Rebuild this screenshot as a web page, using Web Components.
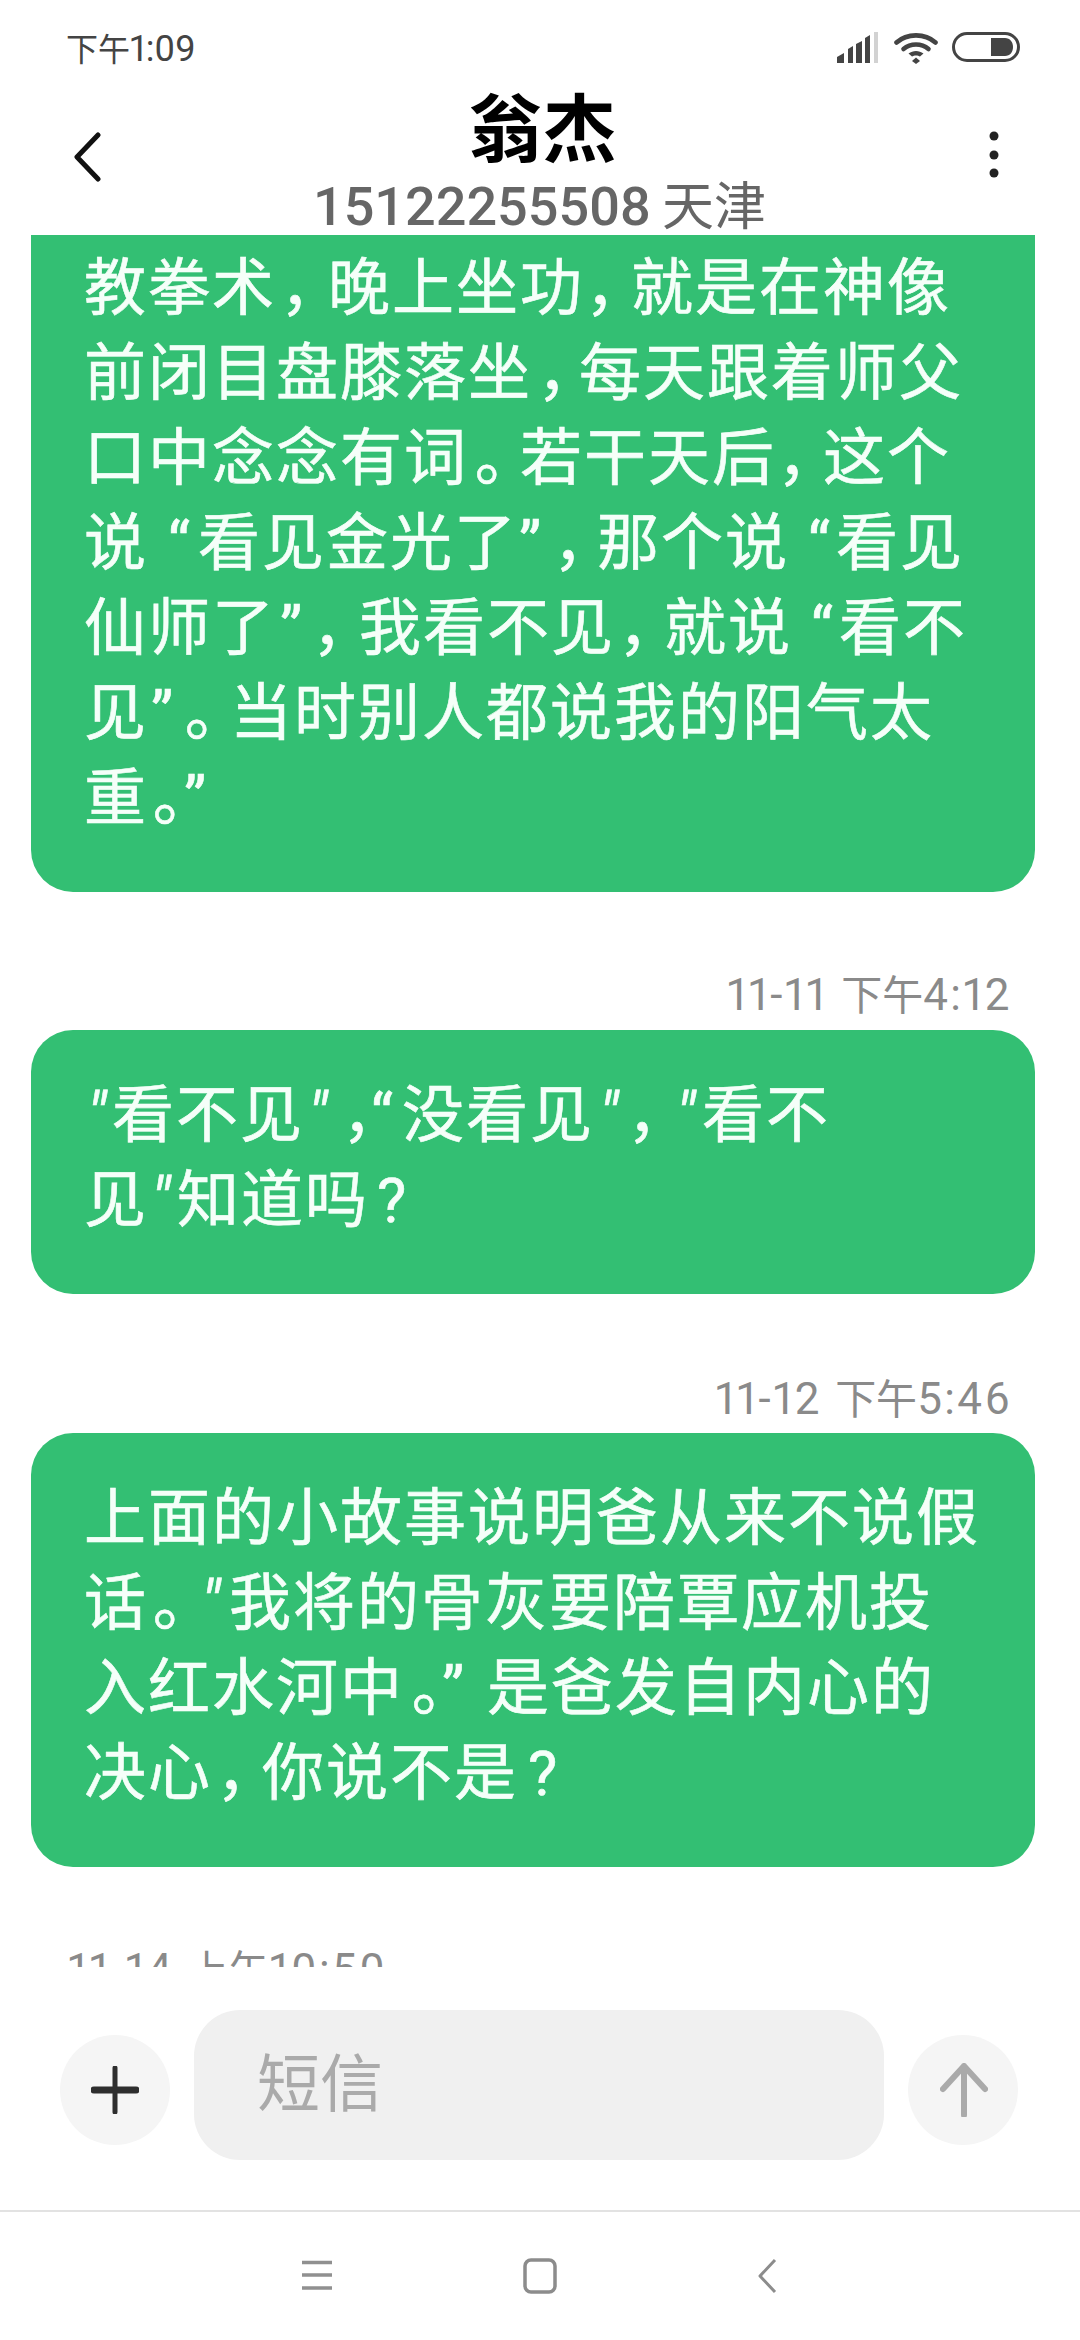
<!DOCTYPE html>
<html lang="zh-CN">
<head>
<meta charset="utf-8">
<title>短信</title>
<style>
html,body{margin:0;padding:0;background:#fff}
body{font-family:Roboto,"Noto Sans CJK SC",sans-serif}
</style>
</head>
<body>
<sms-app>
  <sms-header slot="header" name="翁杰" sub="15122255508" city="天津" time="1:09" ampm="下午"></sms-header>
  <sms-bubble cut>教拳术<p-m w="52" x="8">，</p-m>晚上坐功<p-m w="47" x="5">，</p-m>就是在神像<br>前闭目盘膝落坐<p-m w="47" x="9">，</p-m>每天跟着师父<br>口中念念有词<p-m w="52" x="6">。</p-m>若干天后<p-m w="47" x="5">，</p-m>这个<br>说<p-m w="50" x="20">“</p-m>看见金光了<p-m w="35" x="1">”</p-m><p-m w="44" x="4">，</p-m>那个说<p-m w="47" x="19">“</p-m>看见<br>仙师了<p-m w="38" x="4">”</p-m><p-m w="45" x="2">，</p-m>我看不见<p-m w="49" x="7">，</p-m>就说<p-m w="47" x="19">“</p-m>看不<br>见<p-m w="31" x="3">”</p-m><p-m w="51" x="5">。</p-m>当时别人都说我的阳气太<br>重<p-m w="36" x="4">。</p-m><p-m w="40" x="0">”</p-m></sms-bubble>
  <sms-stamp align="right">11-11 <c-j>下午</c-j>4:12</sms-stamp>
  <sms-bubble><p-m w="28" x="3" i>"</p-m>看不见<p-m w="38" x="4" i>"</p-m><p-m w="28" x="4">，</p-m><p-m w="32" x="1">“</p-m>没看见<p-m w="36" x="5" i>"</p-m><p-m w="44" x="1">，</p-m><p-m w="28" x="2" i>"</p-m>看不<br>见<p-m w="29" x="3" i>"</p-m>知道吗<p-m w="40" x="8">?</p-m></sms-bubble>
  <sms-stamp align="right" style="margin-top:80px;margin-bottom:9px">11-12 <c-j>下午</c-j>5:46</sms-stamp>
  <sms-bubble>上面的小故事说明爸从来不说假<br>话<p-m w="50" x="4">。</p-m><p-m w="31" x="3" i>"</p-m>我将的骨灰要陪覃应机投<br>入红水河中<p-m w="36" x="7">。</p-m><p-m w="47" x="2">”</p-m>是爸发自内心的<br>决心<p-m w="50" x="8">，</p-m>你说不是<p-m w="40" x="10">?</p-m></sms-bubble>
  <sms-stamp>11-14 <c-j>上午</c-j>10:50</sms-stamp>
  <sms-composer slot="composer" placeholder="短信"></sms-composer>
  <sms-nav slot="nav"></sms-nav>
</sms-app>

<script>
function def(name, html, init){
  customElements.define(name, class extends HTMLElement{
    constructor(){super();this.attachShadow({mode:'open'})}
    connectedCallback(){
      this.shadowRoot.innerHTML = typeof html==='function'?html(this):html;
      if(init)init(this);
    }
  });
}

def('sms-app',`<style>
:host{display:flex;flex-direction:column;width:1080px;height:2340px;overflow:hidden;background:#fff;color:#000}
.list{flex:none;height:1732px;overflow:hidden;display:flex;flex-direction:column}
</style>
<slot name="header"></slot>
<div class="list"><slot></slot></div>
<slot name="composer"></slot>
<slot name="nav"></slot>`);

def('sms-header',h=>`<style>
:host{display:block;height:235px;flex:none;background:#fff}
.status{height:86px;box-sizing:border-box;display:flex;align-items:flex-start;justify-content:space-between;padding:29px 60px 0 66px;color:#444}
.time{font-size:36px;line-height:40px;font-variant-numeric:proportional-nums}
.time span{font-size:32px}
.icons{display:flex;align-items:flex-start;margin-top:3px}
.icons svg{display:block}
.bar{height:149px;box-sizing:border-box;display:grid;grid-template-columns:1fr auto 1fr;align-items:start}
.back{padding:46px 0 0 71px}
.more{padding:44px 0 0 0;justify-self:end;margin-right:80px}
.mid{text-align:center;margin-left:2px;padding-top:3px}
.name{font-size:74px;line-height:84px;font-weight:700;color:#000;white-space:nowrap;padding-left:3px}
.sub{font-size:54px;line-height:56px;margin-top:6px;font-weight:500;color:#666;white-space:nowrap;padding-right:3px;word-spacing:-2px}
.sub span{font-size:52px;font-weight:400}
</style>
<div class="status">
  <div class="time"><span>${h.getAttribute('ampm')}</span>${h.getAttribute('time')}</div>
  <div class="icons">
    <svg width="42" height="31" viewBox="0 0 42 31">
      <path d="M0 31V25L7 21V31Z" fill="#444"/><path d="M11 31V17L16 14V31Z" fill="#444"/><path d="M19 31V12L25 9V31Z" fill="#444"/><path d="M28 31V6L33 3V31Z" fill="#444"/><path d="M37 31V0H41V31Z" fill="#d2d2d2"/>
    </svg>
    <svg width="44" height="32" viewBox="0 0 44 32" style="margin-left:15px">
      <g fill="none" stroke="#444" stroke-width="4.6" stroke-linecap="round"><path d="M2.500 10.500C13 1 31 1 41.500 10.500"/><path d="M9.500 17C16.500 11 27.500 11 34.500 17"/></g>
      <path d="M14.500 21.500C19 18 25 18 29.500 21.500L26 24.500C24 23 20 23 18 24.500Z" fill="#444"/>
      <path d="M22 25.500L26 29L22 32L18 29Z" fill="#444"/>
    </svg>
    <svg width="68" height="30" viewBox="0 0 68 30" style="margin-left:14px">
      <rect x="1.500" y="1.500" width="65" height="27" rx="13.500" fill="none" stroke="#444" stroke-width="3"/>
      <path d="M39 6H53C58 6 61 10 61 15C61 20 58 24 53 24H39Z" fill="#444"/>
    </svg>
  </div>
</div>
<div class="bar">
  <div class="back"><svg width="32" height="50" viewBox="0 0 32 50" style="display:block"><path d="M27 3L6 25L27 47" fill="none" stroke="#111" stroke-width="5" stroke-linecap="round" stroke-linejoin="round"/></svg></div>
  <div class="mid"><div class="name">${h.getAttribute('name')}</div><div class="sub">${h.getAttribute('sub')} <span>${h.getAttribute('city')}</span></div></div>
  <div class="more"><svg width="12" height="50" viewBox="0 0 12 50" style="display:block"><circle cx="6" cy="6" r="4.500" fill="#222"/><circle cx="6" cy="25" r="4.500" fill="#222"/><circle cx="6" cy="43" r="4.500" fill="#222"/></svg></div>
</div>`);

def('sms-bubble',`<style>
:host{display:block;flex:none;width:1004px;margin-left:31px;box-sizing:border-box;background:#33bf73;color:#f5fff9;border-radius:42px;padding:43px 20px 51px 53px;font-size:62px;line-height:85px;letter-spacing:2px;white-space:nowrap;font-weight:400;-webkit-text-stroke:.6px #f5fff9}
:host([cut]){border-radius:0 0 42px 42px;padding-top:11px}
</style><slot></slot>`);

def('sms-stamp',`<style>
:host{display:block;flex:none;height:50px;line-height:50px;font-size:44px;letter-spacing:2.4px;font-variant-numeric:proportional-nums;color:#8a8a8a;margin:78px 0 10px;padding:0 68px 0 68px;white-space:nowrap}
:host([align=right]){text-align:right}
</style><slot></slot>`);

def('c-j',`<style>
:host{display:inline;font-size:41px;letter-spacing:0}
</style><slot></slot>`);

def('p-m',`<style>
:host{display:inline-block;box-sizing:border-box;letter-spacing:0;white-space:nowrap;font-feature-settings:"palt"}
:host([i]){font-style:italic}
</style><slot></slot>`, h=>{
  h.style.width=(h.getAttribute('w')||60)+'px';
  h.style.paddingLeft=(h.getAttribute('x')||0)+'px';
});

def('sms-composer',h=>`<style>
:host{display:flex;flex:none;box-sizing:border-box;height:243px;padding:43px 62px 0 60px;gap:24px;align-items:flex-start;background:#fff}
.c{flex:none;width:110px;height:110px;border-radius:50%;background:#f5f5f5;margin-top:25px;display:flex;align-items:center;justify-content:center}
.f{flex:none;width:690px;height:150px;border-radius:46px;background:#f0f0f0;box-sizing:border-box;padding:0 0 0 63px;font-size:63px;line-height:150px;color:#aaa}
</style>
<div class="c"><svg width="48" height="48" viewBox="0 0 48 48"><path d="M24 2V46" stroke="#2e2e2e" stroke-width="5" stroke-linecap="round"/><path d="M3 24H45" stroke="#2e2e2e" stroke-width="7" stroke-linecap="round"/></svg></div>
<div class="f">${h.getAttribute('placeholder')}</div>
<div class="c"><svg width="48" height="54" viewBox="0 0 48 54" style="margin-left:2px"><path d="M24 3V52M3 26L24 3L45 26" fill="none" stroke="#aaa" stroke-width="6" stroke-linecap="round" stroke-linejoin="round"/></svg></div>`);

def('sms-nav',`<style>
:host{display:flex;flex:none;box-sizing:border-box;height:130px;border-top:2px solid #e2e2e2;background:#fff;align-items:center;padding-left:287px}
svg{display:block;flex:none}
</style>
<svg width="60" height="36" viewBox="0 0 60 36"><path d="M15 4.500H45M15 17H45M15 30H45" stroke="#909090" stroke-width="3.500"/></svg>
<svg width="60" height="36" viewBox="0 0 60 36" style="margin-left:163px"><rect x="15" y="2" width="30" height="32" rx="6" fill="none" stroke="#8c8c8c" stroke-width="3.500"/></svg>
<svg width="60" height="36" viewBox="0 0 60 36" style="margin-left:167px"><path d="M38 2L23 18L38 34" fill="none" stroke="#8c8c8c" stroke-width="3" stroke-linejoin="round"/></svg>`);
</script>
</body>
</html>
